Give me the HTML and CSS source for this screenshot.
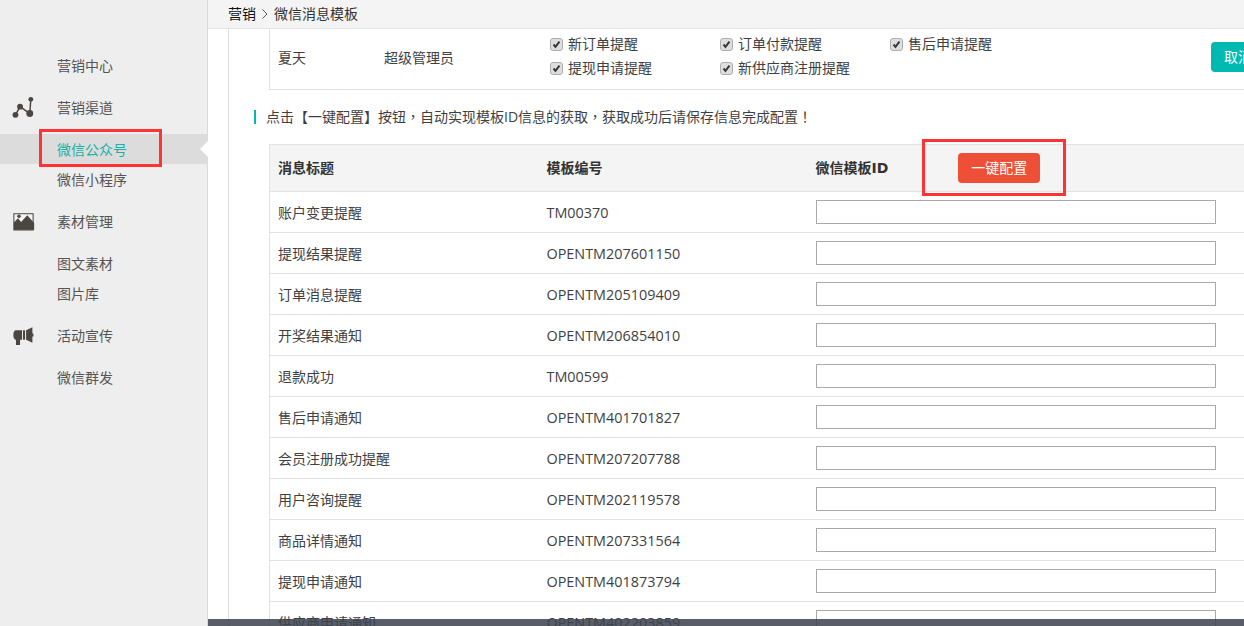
FILE: index.html
```html
<!DOCTYPE html>
<html lang="zh-CN">
<head>
<meta charset="utf-8">
<title>微信消息模板</title>
<link rel="stylesheet" href="styles.css">
</head>
<body>
<div class="app">
  <aside class="side">
    <div class="nav-title">营销中心</div>
    <div class="nav-title">
      <svg class="nav-icon" viewBox="0 0 22 22"><path class="ln" d="M3.300 18 L7.700 10.200 L17 16.800 L18 3.200"/><circle cx="3.300" cy="18" r="2.800"/><circle cx="7.700" cy="10.200" r="2.800"/><circle cx="17" cy="16.800" r="3.300"/><circle cx="18" cy="3.200" r="2.300"/></svg>
      营销渠道
    </div>
    <div class="nav-subs">
      <div class="nav-sub active">微信公众号</div>
      <div class="nav-sub">微信小程序</div>
    </div>
    <div class="nav-title">
      <svg class="nav-icon" viewBox="0 0 22 22"><path class="frame" d="M1.800 3.500h18.400v15.500H1.800z"/><path d="M1.800 19v-7l3.900-4.200 3 3.700 5.900-6.500 6.600 7.500V19z"/><circle cx="6.700" cy="5.900" r="1.700"/></svg>
      素材管理
    </div>
    <div class="nav-subs">
      <div class="nav-sub">图文素材</div>
      <div class="nav-sub">图片库</div>
    </div>
    <div class="nav-title">
      <svg class="nav-icon" viewBox="0 0 22 22"><path d="M3.800 6h5.800v9H7.700v5H3.800v-5c-1.500 0-2.500-1.500-2.500-4.500S2.300 6 3.800 6z"/><path d="M10.500 6h2v9h-2z"/><path d="M13.500 6l6-3v6h1v3h-1v6l-6-3z"/></svg>
      活动宣传
    </div>
    <div class="nav-title">微信群发</div>
  </aside>
  <main class="main">
    <header class="crumb"><span class="crumb-root">营销</span><svg class="chev" viewBox="0 0 8 12"><path d="M1.500 1.500 L6 6 L1.500 10.500"/></svg><span>微信消息模板</span></header>
    <div class="content">
      <div class="user-row">
        <span class="user-name">夏天</span>
        <span class="user-role">超级管理员</span>
        <div class="opts">
          <label class="opt"><svg class="chk" viewBox="0 0 13 13"><path d="M3 6.500 L5.300 9.300 L10 3.200"/></svg>新订单提醒</label>
          <label class="opt"><svg class="chk" viewBox="0 0 13 13"><path d="M3 6.500 L5.300 9.300 L10 3.200"/></svg>订单付款提醒</label>
          <label class="opt"><svg class="chk" viewBox="0 0 13 13"><path d="M3 6.500 L5.300 9.300 L10 3.200"/></svg>售后申请提醒</label>
          <label class="opt"><svg class="chk" viewBox="0 0 13 13"><path d="M3 6.500 L5.300 9.300 L10 3.200"/></svg>提现申请提醒</label>
          <label class="opt"><svg class="chk" viewBox="0 0 13 13"><path d="M3 6.500 L5.300 9.300 L10 3.200"/></svg>新供应商注册提醒</label>
        </div>
        <button class="btn-cancel">取消</button>
      </div>
      <p class="note" lang="zh-TW">点击【一键配置】按钮，自动实现模板ID信息的获取，获取成功后请保存信息完成配置！</p>
      <table class="tpl">
        <colgroup><col class="c1"><col class="c2"><col></colgroup>
        <thead>
          <tr><th>消息标题</th><th>模板编号</th><th><div class="th-id"><span>微信模板ID</span><button class="btn-auto">一键配置</button></div></th></tr>
        </thead>
        <tbody>
          <tr><td>账户变更提醒</td><td class="code">TM00370</td><td class="cell-in"><input class="tid" type="text"></td></tr>
          <tr><td>提现结果提醒</td><td class="code">OPENTM207601150</td><td class="cell-in"><input class="tid" type="text"></td></tr>
          <tr><td>订单消息提醒</td><td class="code">OPENTM205109409</td><td class="cell-in"><input class="tid" type="text"></td></tr>
          <tr><td>开奖结果通知</td><td class="code">OPENTM206854010</td><td class="cell-in"><input class="tid" type="text"></td></tr>
          <tr><td>退款成功</td><td class="code">TM00599</td><td class="cell-in"><input class="tid" type="text"></td></tr>
          <tr><td>售后申请通知</td><td class="code">OPENTM401701827</td><td class="cell-in"><input class="tid" type="text"></td></tr>
          <tr><td>会员注册成功提醒</td><td class="code">OPENTM207207788</td><td class="cell-in"><input class="tid" type="text"></td></tr>
          <tr><td>用户咨询提醒</td><td class="code">OPENTM202119578</td><td class="cell-in"><input class="tid" type="text"></td></tr>
          <tr><td>商品详情通知</td><td class="code">OPENTM207331564</td><td class="cell-in"><input class="tid" type="text"></td></tr>
          <tr><td>提现申请通知</td><td class="code">OPENTM401873794</td><td class="cell-in"><input class="tid" type="text"></td></tr>
          <tr><td>供应商申请通知</td><td class="code">OPENTM402203859</td><td class="cell-in"><input class="tid" type="text"></td></tr>
        </tbody>
      </table>
    </div>
  </main>
  <div class="mark mark-nav"></div>
  <div class="mark mark-btn"></div>
  <div class="bottom-bar"></div>
</div>
</body>
</html>
```
FILE: styles.css
```css
* { box-sizing: border-box; }
html, body { margin: 0; height: 100%; overflow: hidden; background: #fff; }
body { font: 14px/20px "Open Sans", "Noto Sans CJK SC", sans-serif; color: #3f3f3f; }
.app { display: flex; height: 626px; overflow: hidden; }

.side { width: 208px; flex: none; background: #eee; border-right: 1px solid #d9d9d9; padding-top: 45px; color: #555; }
.nav-title { position: relative; height: 42px; line-height: 42px; padding-left: 57px; }
.nav-icon { position: absolute; left: 12px; top: 9px; width: 23px; height: 23px; fill: #4a4741; }
.nav-icon .ln { fill: none; stroke: #4a4741; stroke-width: 1.4; }
.nav-icon .frame { fill: #f4f4f4; stroke: #4a4741; stroke-width: 1; }
.nav-subs { padding: 5px 0 7px; }
.nav-sub { position: relative; height: 30px; line-height: 32px; padding-left: 57px; }
.nav-sub.active { background: #dcdcdc; color: #17b1a8; margin-right: -1px; }
.nav-sub.active::after { content: ""; position: absolute; right: 0; top: 7px; border: 8px solid transparent; border-right-color: #fff; border-left-width: 0; }

.main { flex: 1; min-width: 0; overflow: hidden; }
.crumb { display: flex; align-items: center; height: 29px; padding: 0 0 1px 20px; background: #f4f4f4; border-bottom: 1px solid #e6e6e6; color: #333; }
.crumb-root { color: #111; }
.chev { width: 8px; height: 12px; margin: 0 5px 0 5px; fill: none; stroke: #555; stroke-width: 1; }
.content { margin-left: 20px; border-left: 1px solid #ddd; width: 1100px; padding-left: 40px; height: 600px; }

.user-row { display: flex; align-items: center; height: 61px; border-left: 1px solid #e2e2e2; border-bottom: 1px solid #e2e2e2; padding: 0 0 2px 8px; }
.user-name { width: 106px; }
.user-role { width: 166px; }
.opts { display: grid; grid-template-columns: repeat(3, 170px); row-gap: 4px; align-content: center; width: 661px; flex: none; margin-bottom: 4px; }
.opt { display: flex; align-items: center; gap: 6px; height: 20px; white-space: nowrap; }
.chk { width: 13px; height: 13px; flex: none; margin-right: -1px; background: #dedede; border: 1px solid #aeaeae; border-radius: 3px; fill: none; stroke: #3a3a3a; stroke-width: 2.4; }
.btn-cancel { height: 30px; border: 0; padding: 0 13px; border-radius: 4px; background: #00bab2; color: #fff; font: inherit; flex: none; margin-bottom: 2px; white-space: nowrap; }

.note { position: relative; margin: 17px 0 17px -3px; height: 20px; white-space: nowrap; font-family: "Open Sans", "Noto Sans CJK TC", sans-serif; }
.note::before { content: ""; position: absolute; left: -12px; top: 3px; width: 2px; height: 14px; background: #00bab2; }

.tpl { width: 1000px; table-layout: fixed; border-collapse: collapse; border-left: 1px solid #e2e2e2; }
.c1, .c2 { width: 269px; }
.tpl th { height: 47px; background: #f4f4f4; text-align: left; padding: 0 8px 1px; font-weight: 700; color: #333; border-top: 1px solid #e2e2e2; border-bottom: 1px solid #e2e2e2; font-family: "DejaVu Sans", "Noto Sans CJK SC", sans-serif; }
.tpl td { height: 41px; padding: 2px 8px 0; border-bottom: 1px solid #e2e2e2; }
.tpl td.code { font-size: 14.4px; }
.tpl td.cell-in { padding-top: 0; }
.th-id { display: flex; align-items: center; gap: 70px; }
.btn-auto { width: 82px; height: 30px; border: 0; padding: 0; border-radius: 4px; background: #ee5037; color: #fff; font: 400 14px/20px "Open Sans", "Noto Sans CJK SC", sans-serif; }
.tid { display: block; width: 400px; height: 24px; border: 1px solid #aaa; background: #fff; padding: 0; }

.mark { position: absolute; border: 3px solid #f33; }
.mark-nav { left: 39px; top: 129px; width: 123px; height: 38px; }
.mark-btn { left: 922px; top: 139px; width: 144px; height: 57px; }
.bottom-bar { position: absolute; left: 208px; right: 0; top: 619px; height: 7px; background: rgba(60, 66, 78, .86); }
```
